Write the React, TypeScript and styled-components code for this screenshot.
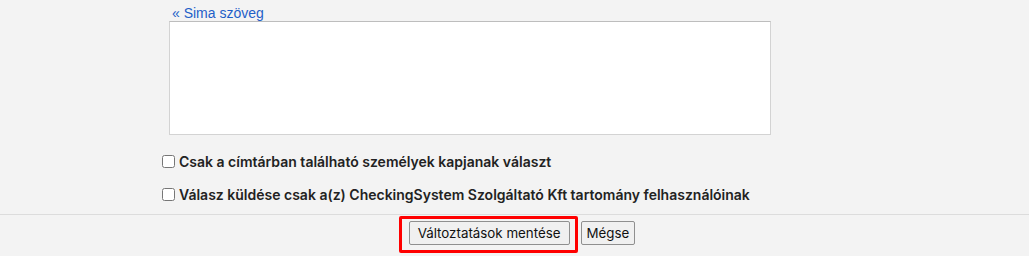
import React from "react";
import styled, { createGlobalStyle } from "styled-components";

const Global = createGlobalStyle`
  html, body { margin: 0; padding: 0; background: #f3f3f3; }
  body { font-family: "Liberation Sans", Arial, sans-serif; }
`;

const Page = styled.div`
  width: 1029px;
  height: 256px;
  background: #f3f3f3;
  display: flex;
  flex-direction: column;
  overflow: hidden;
`;

const Content = styled.div`
  display: flex;
  flex-direction: column;
  padding: 6px 0 0 162px;
  height: 214px;
  box-sizing: border-box;
`;

const Link = styled.a`
  font-family: "Liberation Sans", Arial, sans-serif;
  font-size: 14px;
  line-height: 15px;
  color: #1f5fc8;
  text-decoration: none;
  margin-left: 10px;
`;

const TextArea = styled.textarea`
  width: 602px;
  height: 114px;
  box-sizing: border-box;
  margin: 0 0 0 7px;
  border: 1px solid #d3d3d3;
  border-top-color: #bdbdbd;
  background: #fff;
  resize: none;
  outline: none;
`;

const Options = styled.div`
  display: flex;
  flex-direction: column;
  gap: 16px;
  margin-top: 18px;
`;

const Option = styled.label`
  display: flex;
  align-items: center;
  gap: 4px;
  font-family: Inter, sans-serif;
  font-weight: 600;
  font-size: 14px;
  line-height: 17px;
  color: #222;
`;

const Check = styled.input`
  margin: 0;
  width: 13px;
  height: 13px;
`;

const Footer = styled.div`
  border-top: 1px solid #dcdcdc;
  display: flex;
  justify-content: center;
  align-items: flex-start;
  gap: 3px;
  padding: 1px 0 0 5px;
`;

const Highlight = styled.div`
  border: 3px solid #ff0000;
  border-radius: 2px;
  padding: 2px 5px 5px 7px;
  display: flex;
`;

const Button = styled.button<{ $secondary?: boolean }>`
  font-family: Inter, sans-serif;
  font-size: 13.33px;
  line-height: 16px;
  color: #111;
  background: #f0f0f0;
  border: 1px solid #8f8f8f;
  border-radius: 2px;
  padding: ${(p) => (p.$secondary ? "3px 5px" : "3px 8px")};
  margin: ${(p) => (p.$secondary ? "5px 0 0" : "0")};
  height: 24px;
`;

export default function App() {
  return (
    <>
      <Global />
      <Page>
        <Content>
          <Link href="#">« Sima szöveg</Link>
          <TextArea />
          <Options>
            <Option>
              <Check type="checkbox" />
              Csak a címtárban található személyek kapjanak választ
            </Option>
            <Option>
              <Check type="checkbox" />
              Válasz küldése csak a(z) CheckingSystem Szolgáltató Kft tartomány felhasználóinak
            </Option>
          </Options>
        </Content>
        <Footer>
          <Highlight>
            <Button>Változtatások mentése</Button>
          </Highlight>
          <Button $secondary>Mégse</Button>
        </Footer>
      </Page>
    </>
  );
}
